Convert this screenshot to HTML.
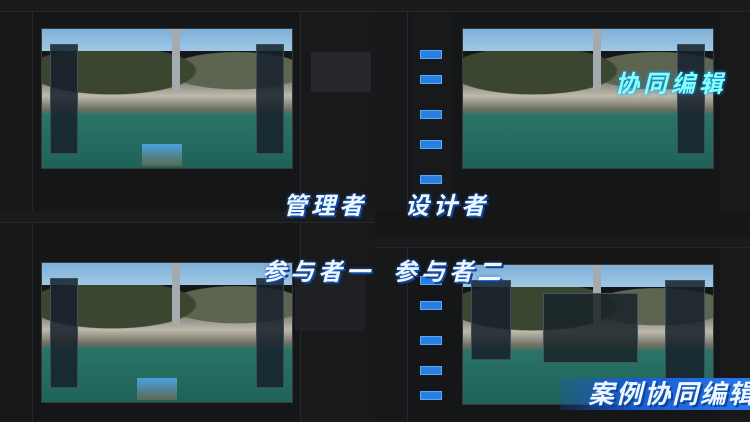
<!DOCTYPE html>
<html><head><meta charset="utf-8"><style>
*{margin:0;padding:0;box-sizing:border-box}
html,body{width:750px;height:422px;overflow:hidden}
body{background:#121314;position:relative;font-family:"Liberation Sans","Noto Sans CJK SC",sans-serif}
.q{position:absolute;width:375px;height:211px;background:#151617;overflow:hidden}
.top{position:absolute;left:0;top:0;width:375px;height:12px;background:#1a1b1d;border-bottom:1px solid #26272a}
.side{position:absolute;left:0;top:12px;width:33px;height:199px;background:#17181a;border-right:1px solid #26272a}
.rp{position:absolute;right:0;top:12px;width:75px;height:199px;background:#19191b;border-left:1px solid #26272a}
.scene{position:absolute;width:252px;height:141px;overflow:hidden;border:1px solid #3a3a3a;
background:
linear-gradient(180deg,#7fb0d8 0%,#a0c8e4 16%,transparent 16%),
radial-gradient(ellipse 55% 28% at 28% 30%,#3a4630 0 60%,transparent 62%),
radial-gradient(ellipse 45% 22% at 78% 30%,#5d6450 0 60%,transparent 62%),
linear-gradient(180deg,transparent 22%,#3e4a34 30%,#8f8e84 40%,#bdb9ad 48%,#6f6d62 58%,#2a7466 62%,#1f6258 100%)}
.scene .tw{position:absolute;left:52%;top:0;width:8px;height:62px;background:#a4aaae}
.pl{position:absolute;left:8px;top:15px;width:28px;height:110px;background:rgba(22,32,42,.85);border:1px solid #3a5060}
.pr{position:absolute;right:8px;top:15px;width:28px;height:110px;background:rgba(22,32,42,.85);border:1px solid #3a5060}
.pic{position:absolute;left:100px;top:115px;width:40px;height:22px;background:linear-gradient(#4aa0e0,#5a6a50)}
.btn{position:absolute;width:22px;height:9px;background:#2a7ee0;border:1px solid #5af}
.t{position:absolute;font-style:italic;font-weight:bold;color:#eef6ff;text-shadow:0 0 3px #1a6ad8,2px 2px 0 #0d3a8a;letter-spacing:4px;white-space:nowrap}
</style></head><body>
<div class="q" style="left:0;top:0"><div class="top"></div><div class="side"></div><div class="rp">
<div style="position:absolute;left:10px;top:40px;width:60px;height:40px;background:#26272a"></div></div>
<div class="scene" style="left:41px;top:28px"><div class="tw"></div><div class="pl"></div><div class="pr"></div><div class="pic"></div></div></div>

<div class="q" style="left:375px;top:0"><div class="top"></div><div class="side"></div>
<div style="position:absolute;left:36px;top:12px;width:40px;height:199px;background:#18191b"></div>
<div class="btn" style="left:45px;top:50px"></div><div class="btn" style="left:45px;top:75px"></div><div class="btn" style="left:45px;top:110px"></div><div class="btn" style="left:45px;top:140px"></div><div class="btn" style="left:45px;top:175px"></div>
<div class="scene" style="left:87px;top:28px"><div class="tw"></div><div class="pr"></div></div>
<div style="position:absolute;right:0;top:12px;width:30px;height:199px;background:#19191b"></div></div>

<div class="q" style="left:0;top:211px"><div class="top"></div><div class="side"></div><div class="rp"></div>
<div class="scene" style="left:41px;top:51px"><div class="tw"></div><div class="pl"></div><div class="pr"></div><div class="pic" style="left:95px;top:115px"></div></div>
<div style="position:absolute;left:295px;top:60px;width:70px;height:60px;background:#1f2023"></div></div>

<div class="q" style="left:375px;top:211px"><div class="top" style="top:25px"></div><div class="side" style="top:37px"></div>
<div class="btn" style="left:45px;top:65px"></div><div class="btn" style="left:45px;top:90px"></div><div class="btn" style="left:45px;top:125px"></div><div class="btn" style="left:45px;top:155px"></div><div class="btn" style="left:45px;top:180px"></div>
<div class="scene" style="left:87px;top:53px"><div class="tw"></div><div class="pl" style="width:40px;height:80px"></div><div class="pr" style="width:40px;height:115px"></div>
<div style="position:absolute;left:80px;top:28px;width:95px;height:70px;background:rgba(25,35,40,.85);border:1px solid #456"></div></div>
<div style="position:absolute;right:0;top:37px;width:30px;height:174px;background:#19191b"></div></div>

<div style="position:absolute;left:560px;top:378px;width:190px;height:32px;background:linear-gradient(90deg,rgba(20,80,200,.2),#1a5ad0 40%,#2a7af0);"></div>
<div class="t" style="left:283px;top:186px;font-size:24px">管理者</div>
<div class="t" style="left:405px;top:186px;font-size:24px">设计者</div>
<div class="t" style="left:262px;top:252px;font-size:24px">参与者一</div>
<div class="t" style="left:393px;top:252px;font-size:24px">参与者二</div>
<div class="t" style="left:615px;top:64px;font-size:24px;color:#8ff;text-shadow:0 0 4px #0af">协同编辑</div>
<div class="t" style="left:588px;top:374px;font-size:26px;letter-spacing:2px">案例协同编辑</div>
</body></html>
